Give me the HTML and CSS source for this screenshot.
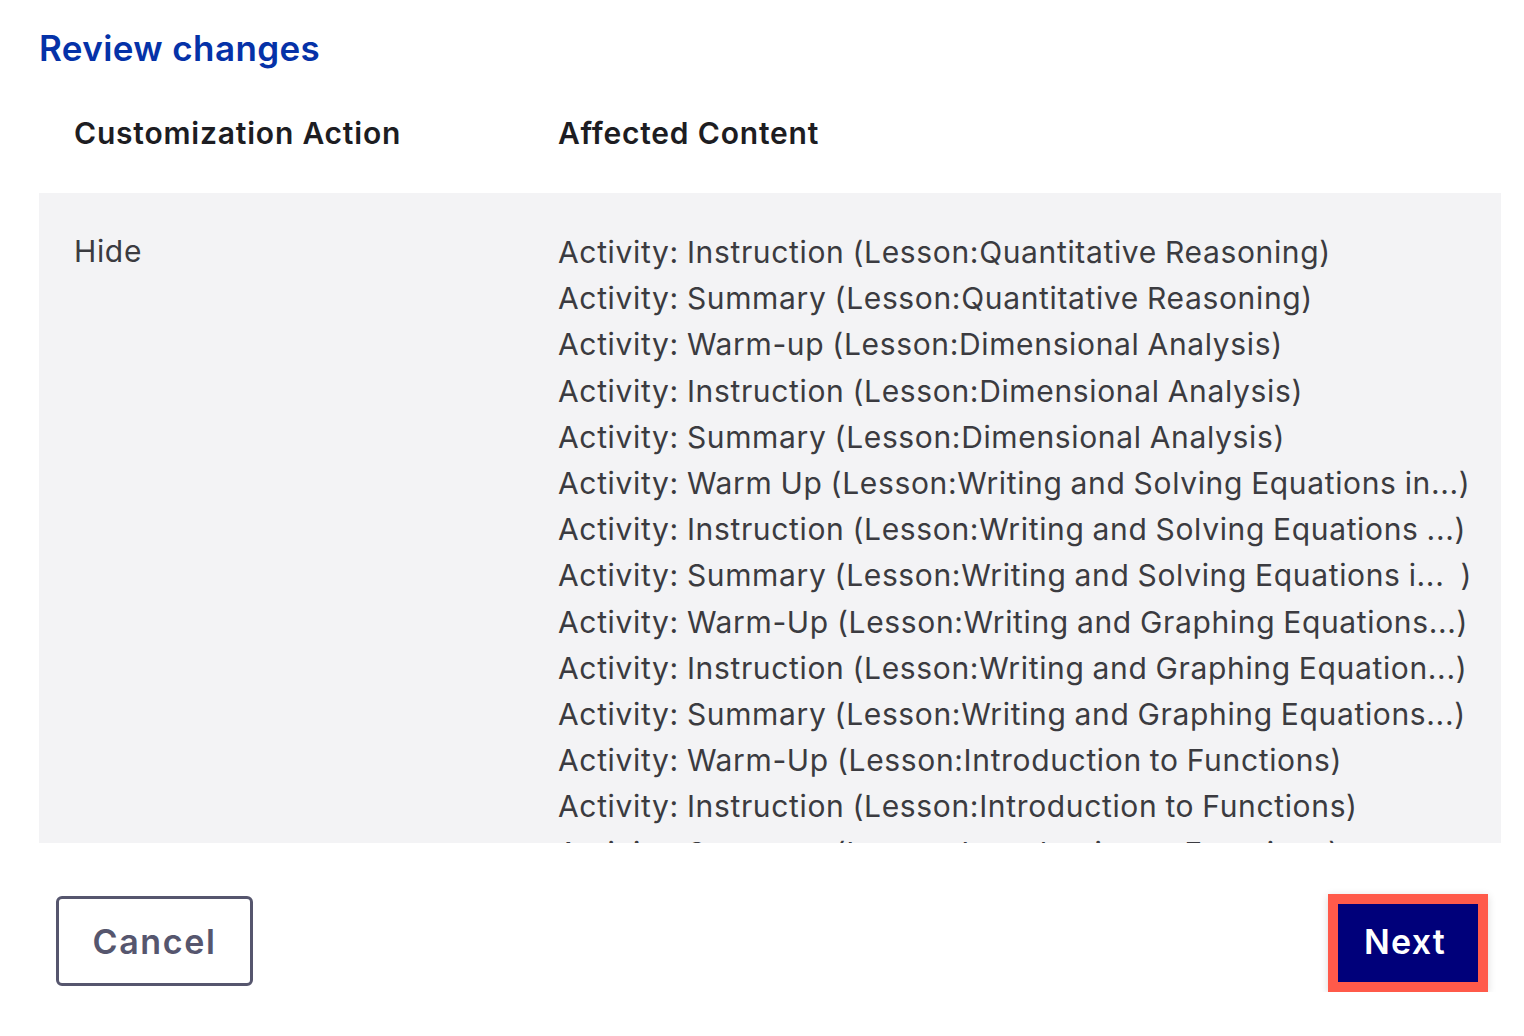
FILE: index.html
```html
<!DOCTYPE html>
<html lang="en">
<head>
    <meta charset="UTF-8">
    <meta name="viewport" content="width=device-width, initial-scale=1.0">
    <title>Review changes</title>
    <link rel="stylesheet" href="styles.css">
</head>
<body>
    <div class="dialog">
        <h1 class="title">Review changes</h1>
        <div class="table-head">
            <div class="col-action">Customization Action</div>
            <div class="col-content">Affected Content</div>
        </div>
        <div class="table-body">
            <div class="row">
                <div class="col-action">Hide</div>
                <ul class="col-content content-list">
                    <li>Activity: Instruction (Lesson:Quantitative Reasoning)</li>
                    <li>Activity: Summary (Lesson:Quantitative Reasoning)</li>
                    <li>Activity: Warm-up (Lesson:Dimensional Analysis)</li>
                    <li>Activity: Instruction (Lesson:Dimensional Analysis)</li>
                    <li>Activity: Summary (Lesson:Dimensional Analysis)</li>
                    <li>Activity: Warm Up (Lesson:Writing and Solving Equations in...)</li>
                    <li>Activity: Instruction (Lesson:Writing and Solving Equations ...)</li>
                    <li>Activity: Summary (Lesson:Writing and Solving Equations i...&nbsp; )</li>
                    <li>Activity: Warm-Up (Lesson:Writing and Graphing Equations...)</li>
                    <li>Activity: Instruction (Lesson:Writing and Graphing Equation...)</li>
                    <li>Activity: Summary (Lesson:Writing and Graphing Equations...)</li>
                    <li>Activity: Warm-Up (Lesson:Introduction to Functions)</li>
                    <li>Activity: Instruction (Lesson:Introduction to Functions)</li>
                    <li>Activity: Summary (Lesson:Introduction to Functions)</li>
                    <li>Activity: Warm-Up (Lesson:Function Notation)</li>
                </ul>
            </div>
        </div>
        <div class="footer">
            <button class="btn btn-cancel">Cancel</button>
            <button class="btn btn-next">Next</button>
        </div>
    </div>
</body>
</html>
```

FILE: styles.css
```css
/* General */
body {
    margin: 0;
    padding: 0;
    background: #ffffff;
    font-family: Inter, "Noto Sans", sans-serif;
}

.dialog {
    padding: 25px 23px 0 39px;
}

.title {
    margin: 0;
    font-size: 35px;
    font-weight: 600;
    line-height: 46px;
    letter-spacing: 0.4px;
    color: #0532a8;
}

/* Table */
.table-head {
    display: flex;
    height: 122px;
    align-items: center;
    padding-top: 2px;
    box-sizing: border-box;
    font-size: 30px;
    font-weight: 600;
    color: #1d1d22;
    letter-spacing: 0.8px;
}

.col-action {
    width: 484px;
    padding-left: 35px;
    flex-shrink: 0;
}

.col-content {
    flex: 1;
}

.table-body {
    background: #f3f3f5;
    height: 650px;
    overflow: hidden;
}

.row {
    display: flex;
    padding-top: 42px;
    font-size: 30px;
    color: #3b3b40;
    letter-spacing: 0.65px;
    word-spacing: -1px;
}

.row .col-action {
    line-height: 32px;
}

.content-list {
    list-style: none;
    margin: -6px 0 0;
    padding: 0;
    line-height: 46.2px;
}

/* Buttons */
.footer {
    display: flex;
    justify-content: space-between;
    align-items: flex-start;
    padding: 51px 13px 0 17px;
}

.btn {
    font-family: Inter, "Noto Sans", sans-serif;
    font-size: 34px;
    font-weight: 600;
    letter-spacing: 1.2px;
    cursor: pointer;
}

.btn-cancel {
    width: 197px;
    height: 90px;
    margin-top: 2px;
    background: #ffffff;
    color: #56566e;
    border: 3px solid #56566e;
    border-radius: 6px;
    letter-spacing: 1.6px;
}

.btn-next {
    width: 160px;
    height: 98px;
    padding: 0 9px 3px 3px;
    background: #00007a;
    color: #ffffff;
    border: 10px solid #ff5a4a;
    box-shadow: 0 2px 8px rgba(0, 0, 0, 0.15);
}
```
